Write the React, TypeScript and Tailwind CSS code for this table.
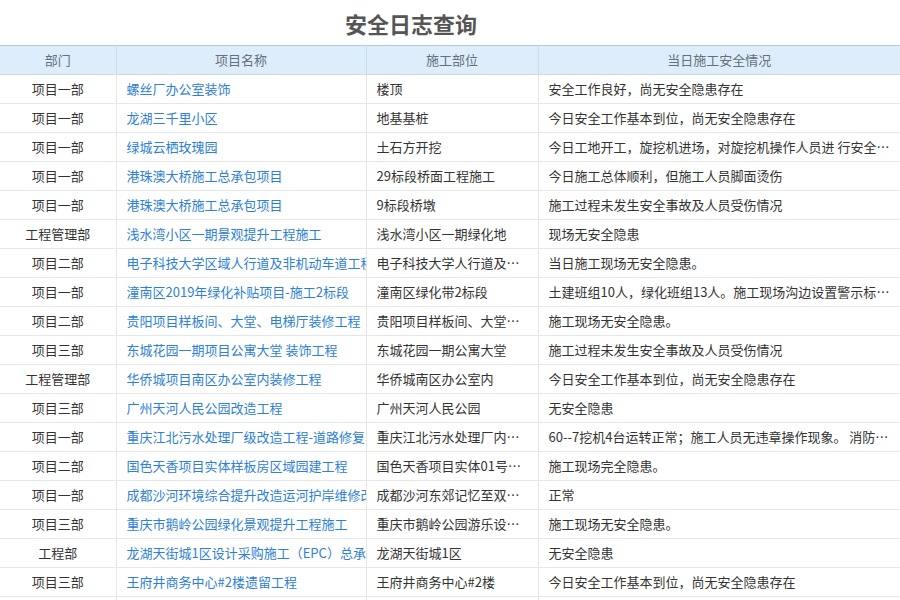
import React from 'react'

type Log = {
  dept: string
  project: string
  part: string
  status: string
}

const logs: Log[] = [
  { dept: '项目一部', project: '螺丝厂办公室装饰', part: '楼顶', status: '安全工作良好，尚无安全隐患存在' },
  { dept: '项目一部', project: '龙湖三千里小区', part: '地基基桩', status: '今日安全工作基本到位，尚无安全隐患存在' },
  { dept: '项目一部', project: '绿城云栖玫瑰园', part: '土石方开挖', status: '今日工地开工，旋挖机进场，对旋挖机操作人员进 行安全技术交底' },
  { dept: '项目一部', project: '港珠澳大桥施工总承包项目', part: '29标段桥面工程施工', status: '今日施工总体顺利，但施工人员脚面烫伤' },
  { dept: '项目一部', project: '港珠澳大桥施工总承包项目', part: '9标段桥墩', status: '施工过程未发生安全事故及人员受伤情况' },
  { dept: '工程管理部', project: '浅水湾小区一期景观提升工程施工', part: '浅水湾小区一期绿化地', status: '现场无安全隐患' },
  { dept: '项目二部', project: '电子科技大学区域人行道及非机动车道工程', part: '电子科技大学人行道及非机动车道', status: '当日施工现场无安全隐患。' },
  { dept: '项目一部', project: '潼南区2019年绿化补贴项目-施工2标段', part: '潼南区绿化带2标段', status: '土建班组10人，绿化班组13人。施工现场沟边设置警示标志，安全' },
  { dept: '项目二部', project: '贵阳项目样板间、大堂、电梯厅装修工程', part: '贵阳项目样板间、大堂、电梯厅', status: '施工现场无安全隐患。' },
  { dept: '项目三部', project: '东城花园一期项目公寓大堂 装饰工程', part: '东城花园一期公寓大堂', status: '施工过程未发生安全事故及人员受伤情况' },
  { dept: '工程管理部', project: '华侨城项目南区办公室内装修工程', part: '华侨城南区办公室内', status: '今日安全工作基本到位，尚无安全隐患存在' },
  { dept: '项目三部', project: '广州天河人民公园改造工程', part: '广州天河人民公园', status: '无安全隐患' },
  { dept: '项目一部', project: '重庆江北污水处理厂级改造工程-道路修复', part: '重庆江北污水处理厂内道路', status: '60--7挖机4台运转正常；施工人员无违章操作现象。 消防设施齐全' },
  { dept: '项目二部', project: '国色天香项目实体样板房区域园建工程', part: '国色天香项目实体01号样板房', status: '施工现场完全隐患。' },
  { dept: '项目一部', project: '成都沙河环境综合提升改造运河护岸维修改造', part: '成都沙河东郊记忆至双桥子段', status: '正常' },
  { dept: '项目三部', project: '重庆市鹅岭公园绿化景观提升工程施工', part: '重庆市鹅岭公园游乐设施区域', status: '施工现场无安全隐患。' },
  { dept: '工程部', project: '龙湖天街城1区设计采购施工（EPC）总承包工程', part: '龙湖天街城1区', status: '无安全隐患' },
  { dept: '项目三部', project: '王府井商务中心#2楼遗留工程', part: '王府井商务中心#2楼', status: '今日安全工作基本到位，尚无安全隐患存在' },
  { dept: '项目一部', project: '龙湖三千里小区', part: '地基基桩', status: '今日安全工作基本到位，尚无安全隐患存在' },
]

export default function App() {
  return (
    <div
      className="w-[900px] h-[600px] overflow-hidden bg-white text-[13px] text-[#333]"
      style={{ fontFamily: '"Microsoft YaHei", "Noto Sans CJK SC", sans-serif' }}
    >
      <div className="h-[45px] flex items-center justify-center pr-[78px]">
        <h1 className="text-[22px] font-bold text-[#555] leading-none">安全日志查询</h1>
      </div>

      <table className="w-full table-fixed border-collapse">
        <colgroup>
          <col className="w-[116px]" />
          <col className="w-[250px]" />
          <col className="w-[172px]" />
          <col />
        </colgroup>
        <thead>
          <tr className="h-[29px] bg-[#ddedfb] border-t border-[#a9c9e6] text-[#66707a]">
            <th className="font-normal border-r border-b border-[#c9dcee]">部门</th>
            <th className="font-normal border-r border-b border-[#c9dcee]">项目名称</th>
            <th className="font-normal border-r border-b border-[#c9dcee]">施工部位</th>
            <th className="font-normal border-b border-[#c9dcee]">当日施工安全情况</th>
          </tr>
        </thead>
        <tbody>
          {logs.map((r, i) => (
            <tr key={i} className="h-[29px]">
              <td className="text-center border-r border-b border-[#e6e6e6] whitespace-nowrap">{r.dept}</td>
              <td className="px-[10px] border-r border-b border-[#e6e6e6] whitespace-nowrap overflow-hidden">
                <a className="text-[#2d80d5] cursor-pointer">{r.project}</a>
              </td>
              <td className="px-[10px] border-r border-b border-[#e6e6e6] whitespace-nowrap overflow-hidden text-ellipsis">
                {r.part}
              </td>
              <td className="px-[10px] border-b border-[#e6e6e6] whitespace-nowrap overflow-hidden text-ellipsis">
                {r.status}
              </td>
            </tr>
          ))}
        </tbody>
      </table>
    </div>
  )
}
